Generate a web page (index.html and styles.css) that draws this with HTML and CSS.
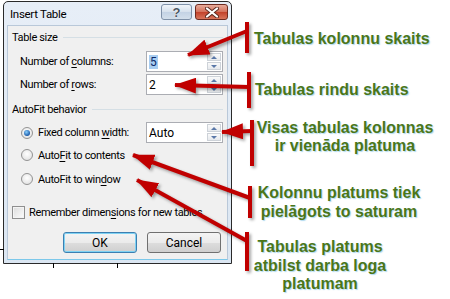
FILE: index.html
```html
<!DOCTYPE html>
<html lang="lv">
<head>
    <meta charset="UTF-8">
    <meta name="viewport" content="width=device-width, initial-scale=1.0">
    <title>Insert Table</title>
    <link rel="stylesheet" href="styles.css">
</head>
<body>
    <div class="page">
        <div class="dialog">
            <div class="titlebar">
                <span class="title">Insert Table</span>
                <div class="caption-btns">
                    <span class="cap-btn help">?</span>
                    <span class="cap-btn close">
                        <svg width="14" height="11" viewBox="0 0 14 11">
                            <path d="M2,1.5 L12,9.5 M12,1.5 L2,9.5" stroke="#5a2a20" stroke-width="4" stroke-linecap="round"/>
                            <path d="M2,1.5 L12,9.5 M12,1.5 L2,9.5" stroke="#fff" stroke-width="2.2" stroke-linecap="round"/>
                        </svg>
                    </span>
                </div>
            </div>
            <div class="client">
                <div class="group-head"><span>Table size</span><i class="rule"></i></div>
                <div class="field-row first">
                    <span class="label">Number of <u>c</u>olumns:</span>
                    <div class="spin">
                        <span class="spin-value"><span class="sel">5</span></span>
                        <div class="spin-btns"><span class="spin-up"></span><span class="spin-down"></span></div>
                    </div>
                </div>
                <div class="field-row second">
                    <span class="label">Number of <u>r</u>ows:</span>
                    <div class="spin">
                        <span class="spin-value">2</span>
                        <div class="spin-btns"><span class="spin-up"></span><span class="spin-down"></span></div>
                    </div>
                </div>
                <div class="group-head gap-top"><span>AutoFit behavior</span><i class="rule"></i></div>
                <div class="radio-row r1">
                    <span class="radio checked"></span>
                    <span class="label">Fixed column <u>w</u>idth:</span>
                    <div class="spin">
                        <span class="spin-value">Auto</span>
                        <div class="spin-btns"><span class="spin-up"></span><span class="spin-down"></span></div>
                    </div>
                </div>
                <div class="radio-row r2">
                    <span class="radio"></span>
                    <span class="label">Auto<u>F</u>it to contents</span>
                </div>
                <div class="radio-row r3">
                    <span class="radio"></span>
                    <span class="label">AutoFit to win<u>d</u>ow</span>
                </div>
                <div class="check-row">
                    <span class="checkbox"></span>
                    <span class="label">Remember dimen<u>s</u>ions for new tables</span>
                </div>
                <div class="button-row">
                    <span class="btn default">OK</span>
                    <span class="btn">Cancel</span>
                </div>
            </div>
        </div>

        <div class="notes">
            <div class="note n1">Tabulas kolonnu skaits</div>
            <div class="note n2">Tabulas rindu skaits</div>
            <div class="note n3">Visas tabulas kolonnas<br>ir vienāda platuma</div>
            <div class="note n4">Kolonnu platums tiek<br>pielāgots to saturam</div>
            <div class="note n5">Tabulas platums<br>atbilst darba loga<br>platumam</div>
        </div>
    </div>

    <svg class="overlay" width="450" height="299" viewBox="0 0 450 299">
        <defs>
            <marker id="head" markerWidth="22" markerHeight="16" refX="21" refY="8" orient="auto-start-reverse" markerUnits="userSpaceOnUse">
                <path d="M0,0 L22,8 L0,16 Z" fill="#c00000"/>
            </marker>
        </defs>
        <g class="ticks">
            <line x1="53.5" y1="263" x2="53.5" y2="268"/>
            <line x1="117.5" y1="263" x2="117.5" y2="268"/>
            <line x1="0" y1="249.5" x2="4" y2="249.5"/>
        </g>
        <g class="marks">
            <line x1="247" y1="22" x2="247" y2="53"/>
            <line x1="249" y1="72" x2="249" y2="108"/>
            <line x1="252" y1="120" x2="252" y2="166"/>
            <line x1="250" y1="186" x2="250" y2="218"/>
            <line x1="247" y1="232" x2="247" y2="271"/>
            <line x1="188" y1="55" x2="247" y2="31" marker-start="url(#head)"/>
            <line x1="175" y1="85" x2="249" y2="87" marker-start="url(#head)"/>
            <line x1="222" y1="132" x2="252" y2="131" marker-start="url(#head)"/>
            <line x1="133" y1="155" x2="250" y2="198" marker-start="url(#head)"/>
            <line x1="137" y1="180" x2="247" y2="241" marker-start="url(#head)"/>
        </g>
    </svg>
</body>
</html>
```

FILE: styles.css
```css
body {
    margin: 0;
    padding: 0;
    width: 450px;
    height: 299px;
    overflow: hidden;
    position: relative;
    background-color: #ffffff;
}

.page {
    display: flex;
    align-items: flex-start;
}

/* dialog window */

.dialog {
    box-sizing: border-box;
    width: 229px;
    height: 263px;
    margin: 1px 0 0 3px;
    border: 1px solid #2a2a2a;
    border-radius: 5px 5px 0 0;
    padding: 0 3px 3px 3px;
    background: linear-gradient(#e7eef7, #dbe6f2);
    display: flex;
    flex-direction: column;
    font-family: Roboto, "Noto Sans", sans-serif;
    font-size: 11px;
    letter-spacing: -0.35px;
    color: #000;
    white-space: nowrap;
}

.titlebar {
    height: 23px;
    display: flex;
    align-items: flex-start;
    justify-content: space-between;
}

.title {
    padding: 4px 0 0 3px;
    line-height: 16px;
    font-size: 11.5px;
    letter-spacing: -0.3px;
}

.caption-btns {
    display: flex;
    gap: 3px;
    margin-top: 2px;
}

.cap-btn {
    box-sizing: border-box;
    height: 16px;
    border-radius: 3px;
    display: flex;
    align-items: center;
    justify-content: center;
}

.help {
    width: 31px;
    border: 1px solid #7f91a8;
    background: linear-gradient(#f1f5fa, #d5e0ec 50%, #c3d2e4 51%, #d3dfeb);
    font-family: "Liberation Sans", sans-serif;
    font-weight: bold;
    font-size: 13px;
    letter-spacing: 0;
    color: #4a5563;
    text-shadow: 0 0 1px #fff, 0 0 1px #fff;
}

.close {
    width: 33px;
    border: 1px solid #6e2a1f;
    background: linear-gradient(#e8ab9b, #d3705a 50%, #c2412a 51%, #d8745b);
}

.client {
    flex: 1;
    border: 1px solid #b9c8d9;
    border-bottom-color: #7cc8ea;
    background-color: #f0f0f0;
    padding: 2px 4px 0 4px;
    display: flex;
    flex-direction: column;
}

.group-head {
    height: 18px;
    display: flex;
    align-items: center;
    gap: 6px;
}

.group-head.gap-top {
    margin-top: 5px;
}

.rule {
    flex: 1;
    height: 1px;
    background-color: #d5dfe5;
}

.field-row {
    height: 21px;
    display: flex;
    align-items: center;
    padding-left: 8px;
}

.field-row.first {
    margin-top: 5px;
}

.field-row.second {
    margin-top: 2px;
}

.label {
    flex-shrink: 0;
}

.label u {
    text-decoration-thickness: 1px;
    text-underline-offset: 2px;
}

.spin {
    box-sizing: border-box;
    margin-left: auto;
    width: 77px;
    height: 21px;
    border: 1px solid #abadb3;
    background-color: #fff;
    display: flex;
    align-items: center;
    justify-content: space-between;
    padding: 0 1px 0 2px;
    font-size: 12px;
    letter-spacing: 0;
}

.sel {
    background-color: #a8cdf1;
    color: #0a2a6a;
    padding: 0 1px;
}

.spin-btns {
    display: flex;
    flex-direction: column;
    gap: 1px;
}

.spin-up,
.spin-down {
    box-sizing: border-box;
    width: 14px;
    height: 8px;
    border: 1px solid #cdd2d8;
    background: linear-gradient(#fafafa, #e6e9ed);
    display: flex;
    align-items: center;
    justify-content: center;
}

.spin-up::after,
.spin-down::after {
    content: '';
    border-left: 3px solid transparent;
    border-right: 3px solid transparent;
}

.spin-up::after {
    border-bottom: 3px solid #5a78a8;
}

.spin-down::after {
    border-top: 3px solid #5a78a8;
}

.radio-row {
    height: 22px;
    display: flex;
    align-items: center;
    gap: 5px;
    padding-left: 9px;
}

.radio-row.r1 {
    height: 21px;
    margin-top: 4px;
}

.radio-row.r2 {
    margin-top: 1px;
}

.radio-row.r3 {
    margin-top: 2px;
}

.radio {
    box-sizing: border-box;
    flex-shrink: 0;
    width: 12px;
    height: 12px;
    border-radius: 50%;
    border: 1px solid #939393;
    background: radial-gradient(circle at 50% 40%, #ffffff, #dcdcdc);
    display: flex;
    align-items: center;
    justify-content: center;
}

.radio.checked::after {
    content: '';
    width: 6px;
    height: 6px;
    border-radius: 50%;
    background: radial-gradient(circle at 40% 35%, #8ad0ff, #1a5aa8 70%);
}

.check-row {
    height: 18px;
    margin-top: 13px;
    display: flex;
    align-items: center;
    gap: 4px;
}

.checkbox {
    box-sizing: border-box;
    flex-shrink: 0;
    width: 13px;
    height: 13px;
    border: 1px solid #8f8f8f;
    background: linear-gradient(135deg, #dcdcdc, #fdfdfd);
    box-shadow: inset 0 0 0 1px #f4f4f4;
}

.button-row {
    margin-top: 11px;
    display: flex;
    justify-content: flex-end;
    gap: 10px;
    padding-right: 2px;
    font-size: 12px;
    letter-spacing: 0;
}

.btn {
    box-sizing: border-box;
    width: 74px;
    height: 21px;
    border: 1px solid #707070;
    border-radius: 3px;
    background: linear-gradient(#f4f4f4, #ebebeb 50%, #dddddd 51%, #cfcfcf);
    display: flex;
    align-items: center;
    justify-content: center;
}

.btn.default {
    border-color: #3c7fb1;
    box-shadow: inset 0 0 0 1px #7fd2f3;
}

/* annotations */

.notes {
    margin-left: 17px;
    padding-top: 30px;
    display: flex;
    flex-direction: column;
    align-items: flex-start;
    font-family: "Liberation Sans", Arial, sans-serif;
    font-weight: bold;
    font-size: 16px;
    line-height: 18px;
    color: #4b7619;
    text-shadow: 1px 1px 1px rgba(110, 185, 225, 0.55);
    white-space: nowrap;
}

.note.n1 {
    padding-left: 5px;
}

.note.n2 {
    margin-top: 33px;
    padding-left: 6px;
}

.note.n3 {
    margin-top: 20px;
    margin-left: 1px;
    width: 190px;
    text-align: center;
}

.note.n4 {
    margin-top: 28px;
    width: 180px;
    line-height: 19px;
    text-align: center;
}

.note.n5 {
    margin-top: 17px;
    margin-left: 1px;
    width: 140px;
    line-height: 18.5px;
    text-align: center;
}

.overlay {
    position: absolute;
    top: 0;
    left: 0;
    pointer-events: none;
}

.ticks line {
    stroke: #000;
    stroke-width: 1;
}

.marks {
    filter: drop-shadow(2px 2px 1.5px rgba(0, 0, 0, 0.35));
}

.marks line {
    stroke: #c00000;
    stroke-width: 4;
}
```
